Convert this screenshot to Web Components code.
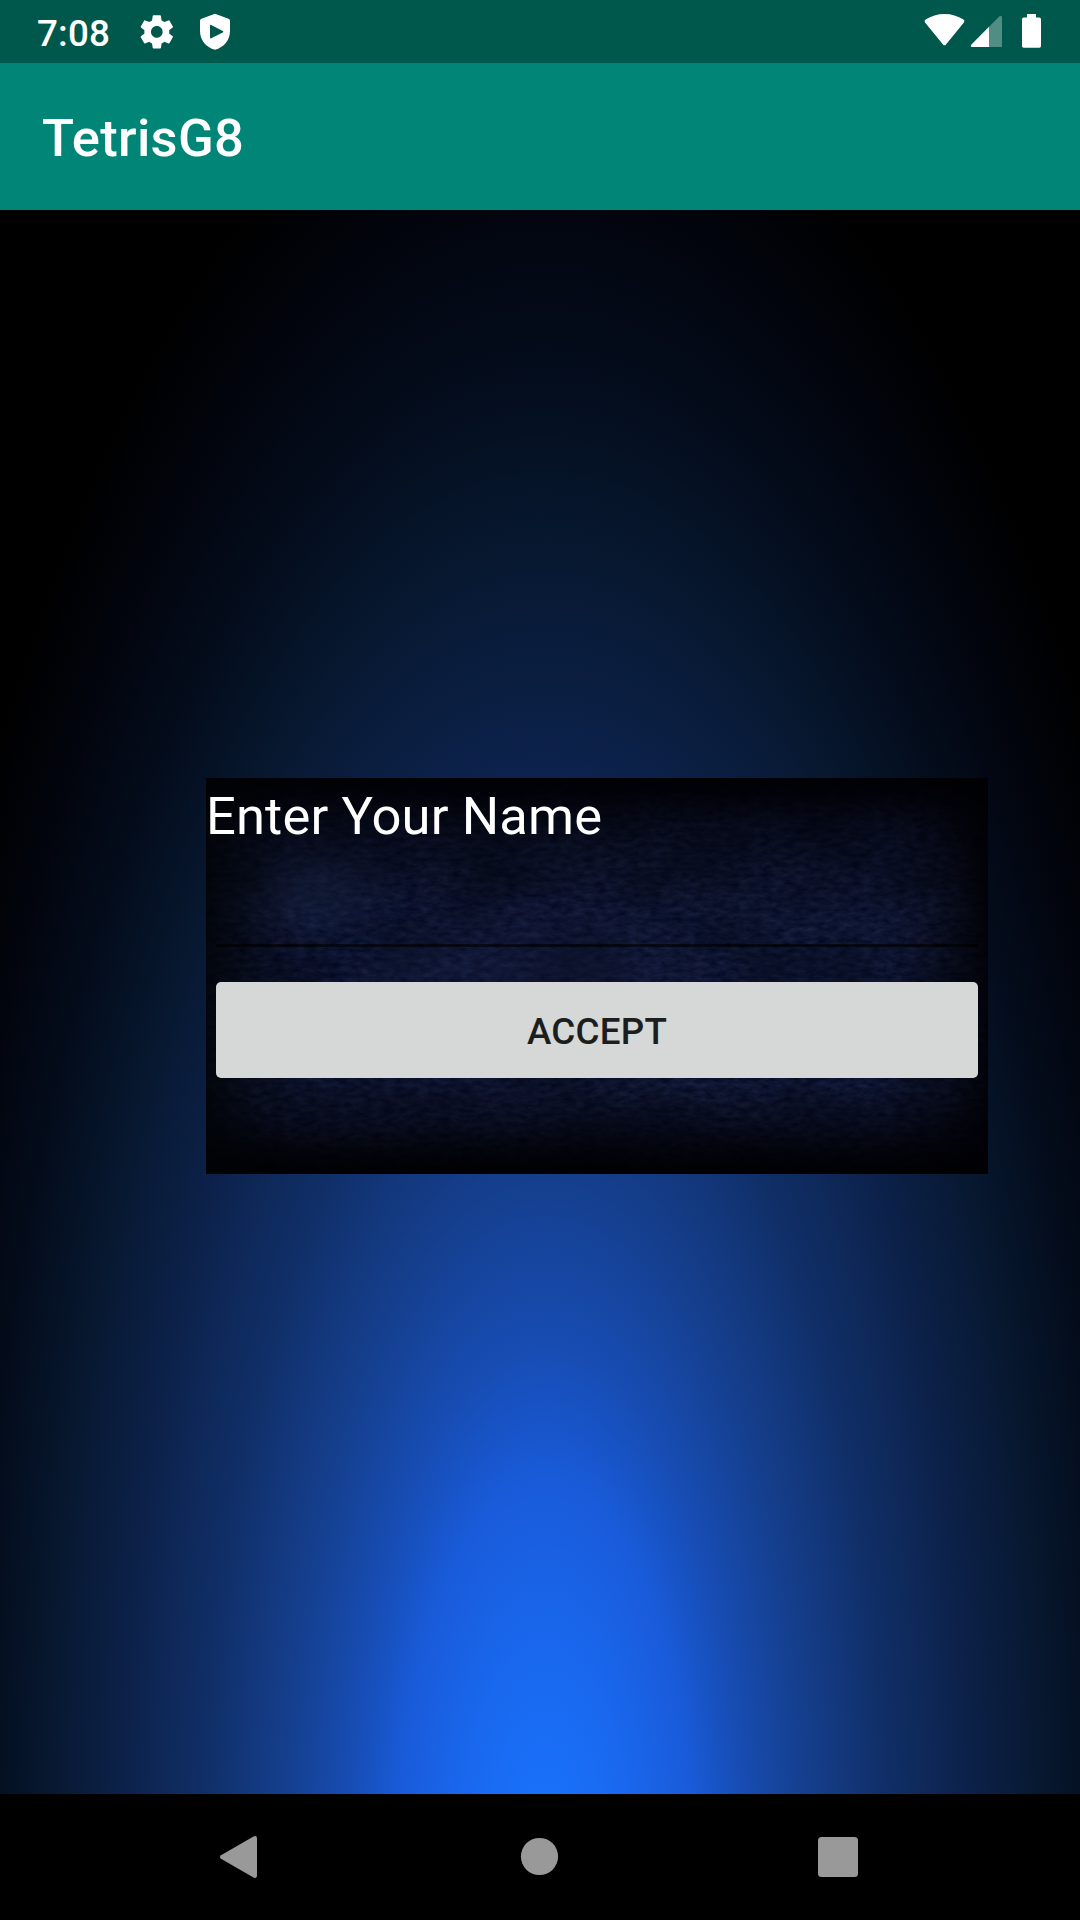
<!DOCTYPE html>
<html lang="en">
<head>
<meta charset="utf-8">
<title>TetrisG8</title>
<style>
html,body{margin:0;padding:0;background:#000}
body{font-family:Roboto,sans-serif;width:1080px;height:1920px;overflow:hidden}
</style>
</head>
<body>
<tetris-app></tetris-app>
<script>
const define=(name,html)=>customElements.define(name,class extends HTMLElement{
  constructor(){super();this.attachShadow({mode:'open'}).innerHTML=html;}
});

define('status-bar',`<style>
:host{display:flex;box-sizing:border-box;height:63px;flex:none;background:#00574b;color:#fff;justify-content:space-between}
.clock{font-size:36.75px;font-weight:500;line-height:43px;padding:12px 0 0 37px;width:120px;box-sizing:border-box;flex:none;white-space:nowrap;letter-spacing:.2px}
.left{display:flex}
svg{display:block}
</style>
<div class="left"><span class="clock">7:08</span>
<svg width="120" height="63" viewBox="120 0 120 63" fill="#fff">
<g transform="translate(136.9 12) scale(1.66)"><path d="M19.43 12.98c.04-.32.07-.64.07-.98s-.03-.66-.07-.98l2.11-1.65c.19-.15.24-.42.12-.64l-2-3.46c-.12-.22-.39-.3-.61-.22l-2.49 1c-.52-.4-1.08-.73-1.69-.98l-.38-2.650C14.46 2.180 14.250 2 14 2h-4c-.25 0-.46.18-.49.42l-.38 2.650c-.61.25-1.170.59-1.690.98l-2.490-1c-.23-.09-.49 0-.61.22l-2 3.460c-.13.22-.07.49.12.64l2.110 1.650c-.04.32-.07.65-.07.98s.03.66.07.98l-2.110 1.650c-.19.15-.24.42-.12.64l2 3.460c.12.22.39.3.61.22l2.490-1c.52.4 1.080.73 1.690.98l.38 2.650c.03.24.24.42.49.42h4c.25 0 .46-.18.49-.42l.38-2.650c.61-.25 1.170-.59 1.690-.98l2.490 1c.23.09.49 0 .61-.22l2-3.460c.12-.22.07-.49-.12-.64l-2.110-1.650zM12 15.500c-1.930 0-3.500-1.570-3.500-3.500s1.570-3.500 3.500-3.500 3.500 1.570 3.500 3.500-1.570 3.500-3.500 3.500z"/></g>
<path fill-rule="evenodd" d="M215 13.8L228.500 18.700Q230 19.300 230 21V31C230 40 224 47.500 215 49.700C206 47.500 200 40 200 31V21Q200 19.300 201.500 18.700ZM210 25.600V37.600Q210 38.800 211.200 38.200L222.800 32.500Q224 31.800 222.800 31.100L211.200 25Q210 24.500 210 25.600Z"/>
</svg></div>
<svg width="170" height="63" viewBox="910 0 170 63" fill="#fff">
<path d="M925 22.500Q923.800 20.700 925.600 19.600Q934 14 944.400 14Q955 14 963.500 19.600Q965.200 20.700 963.900 22.500L946 44.500Q944.500 46.200 943 44.500Z"/>
<path d="M989 26.700V47H972Q970 46.800 971.200 44.700Z"/>
<path fill-opacity=".32" d="M989 26.700L999.500 16.200Q1002 15 1002 17.500V47H989Z"/>
<path d="M1027 14H1036V17.600H1039.400Q1041 17.600 1041 19.200V46Q1041 47.700 1039.400 47.700H1023.600Q1022 47.700 1022 46V19.200Q1022 17.600 1023.600 17.600H1027Z"/>
</svg>`);

define('app-bar',`<style>
:host{display:flex;box-sizing:border-box;height:147px;flex:none;background:#008577;color:#fff;padding:2px 42px 0;align-items:center;font-size:52.5px;font-weight:500;line-height:62px;letter-spacing:.3px}
</style><slot></slot>`);

define('text-field',`<style>
:host{display:flex;flex-direction:column;justify-content:flex-end;height:99px;padding:0 10px}
div{height:3px;background:rgba(0,0,0,.62)}
</style><div></div>`);

define('flat-button',`<style>
:host{display:block;padding:35px 10px 0}
button{display:block;width:100%;height:96px;border:0;border-radius:5px;background:#d6d8d7;color:#1c1d1d;font:500 36.75px/43px Roboto,sans-serif;letter-spacing:.25px;padding:2px 0 0;margin:0}
</style><button><slot></slot></button>`);

define('name-card',`<style>
:host{display:grid;width:782px;height:396px;background:#03040c;overflow:hidden}
svg,.body{grid-area:1/1;min-width:0}
svg{display:block}
.body{display:flex;flex-direction:column;z-index:1}
.label{box-sizing:border-box;height:70px;padding-top:7px;font-size:52.5px;line-height:62px;letter-spacing:.14px;color:#fff;white-space:nowrap}
</style>
<svg width="782" height="396" viewBox="0 0 782 396">
<defs>
<filter id="grain" x="0" y="0" width="100%" height="100%" color-interpolation-filters="sRGB"><feTurbulence type="fractalNoise" baseFrequency=".09 .2" numOctaves="4" seed="8"/><feColorMatrix values="0.11 0 0 0 0  0.12 0 0 0 .022  0.16 0 0 0 .115  0 0 0 0 1"/></filter>
<filter id="cloud" x="0" y="0" width="100%" height="100%" color-interpolation-filters="sRGB"><feTurbulence type="fractalNoise" baseFrequency=".012 .018" numOctaves="4" seed="4"/><feColorMatrix values="0 0 0 0 .01  0 0 0 0 .03  0 0 0 0 .08  2 0 0 0 -.75"/></filter>
<filter id="soft" x="-60%" y="-100%" width="220%" height="300%"><feGaussianBlur stdDeviation="24"/></filter>
<linearGradient id="v" x2="0" y2="1"><stop offset="0" stop-color="#000003" stop-opacity=".98"/><stop offset=".05" stop-color="#000005" stop-opacity=".85"/><stop offset=".12" stop-color="#000208" stop-opacity=".55"/><stop offset=".22" stop-color="#000208" stop-opacity=".25"/><stop offset=".34" stop-color="#000003" stop-opacity="0"/><stop offset=".78" stop-color="#000003" stop-opacity="0"/><stop offset=".87" stop-color="#000006" stop-opacity=".42"/><stop offset=".94" stop-color="#000003" stop-opacity=".78"/><stop offset="1" stop-color="#000003" stop-opacity="1"/></linearGradient>
<linearGradient id="h"><stop offset="0" stop-color="#000305" stop-opacity=".82"/><stop offset=".05" stop-color="#000305" stop-opacity=".5"/><stop offset=".12" stop-color="#000003" stop-opacity="0.05"/><stop offset=".87" stop-color="#000003" stop-opacity="0"/><stop offset=".94" stop-color="#000003" stop-opacity=".35"/><stop offset="1" stop-color="#000003" stop-opacity=".85"/></linearGradient>
</defs>
<rect width="782" height="396" filter="url(#grain)"/>
<rect width="782" height="396" filter="url(#cloud)" opacity=".5"/>
<ellipse cx="105" cy="112" rx="70" ry="30" fill="#22305a" opacity=".4" filter="url(#soft)"/>
<ellipse cx="320" cy="190" rx="170" ry="30" fill="#202b56" opacity=".25" filter="url(#soft)"/>
<rect width="782" height="396" fill="url(#v)"/><rect width="782" height="396" fill="url(#h)"/>
</svg>
<div class="body"><div class="label"><slot></slot></div><text-field></text-field><flat-button>ACCEPT</flat-button></div>`);

define('game-stage',`<style>
:host{display:flex;box-sizing:border-box;flex:1;min-height:0;padding:568px 0 0 206px;align-items:flex-start;
background:radial-gradient(ellipse 655px 1740px at 545px 1665px,#1971fc 0%,#1970f9 5%,#1968ee 13%,#195bda 22.5%,#174cb2 30.5%,#153f8e 40%,#102f68 52%,#0c2149 65%,#071830 76%,#040d1d 86%,#02050e 96%,#000 106%)}
</style><slot></slot>`);

define('nav-bar',`<style>
:host{display:block;height:126px;flex:none;background:#000}
svg{display:block}
</style>
<svg width="1080" height="126" viewBox="0 1794 1080 126" fill="#999">
<path d="M221 1855.200L253.500 1836.600Q257 1835 257 1838.500V1875.500Q257 1879 253.500 1877.400L221 1858.800Q219 1857 221 1855.200Z"/>
<circle cx="539.500" cy="1856.500" r="18.600"/>
<rect x="818" y="1837" width="40" height="40" rx="3.500"/>
</svg>`);

define('tetris-app',`<style>:host{display:flex;flex-direction:column;width:1080px;height:1920px}</style>
<status-bar></status-bar><app-bar>TetrisG8</app-bar>
<game-stage><name-card>Enter Your Name</name-card></game-stage><nav-bar></nav-bar>`);
</script>
</body>
</html>
